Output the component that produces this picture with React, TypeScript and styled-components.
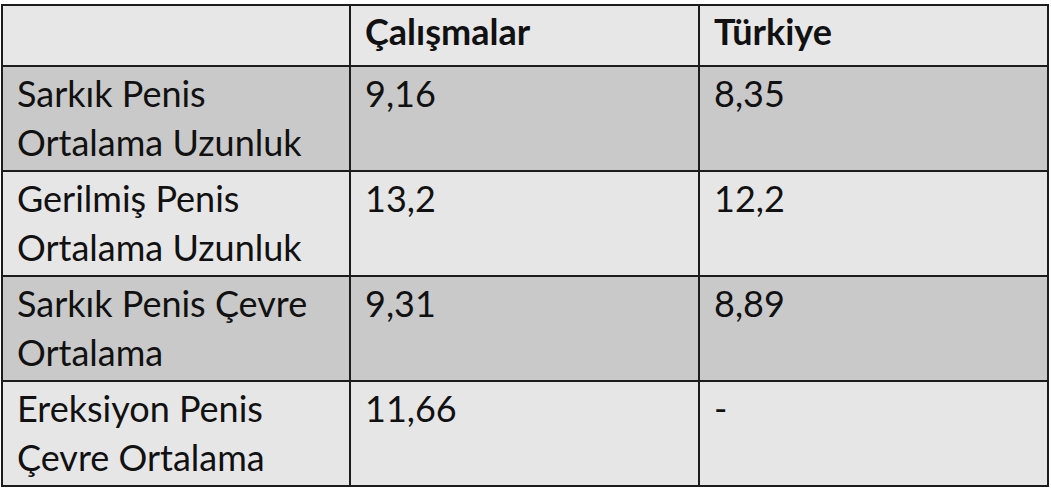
import React from 'react';
import styled, {createGlobalStyle} from 'styled-components';

const GlobalStyle = createGlobalStyle`
    html, body {
        margin: 0;
        padding: 0;
        background: #ffffff;
    }
`;

const rows = [
    {label: ['Sarkık Penis', 'Ortalama Uzunluk'], studies: '9,16', turkey: '8,35', dark: true},
    {label: ['Gerilmiş Penis', 'Ortalama Uzunluk'], studies: '13,2', turkey: '12,2', dark: false},
    {label: ['Sarkık Penis Çevre', 'Ortalama'], studies: '9,31', turkey: '8,89', dark: true},
    {label: ['Ereksiyon Penis', 'Çevre Ortalama'], studies: '11,66', turkey: '-', dark: false},
];

const App: React.FC = () => {
    return (
        <Page>
            <GlobalStyle/>
            <Table>
                <colgroup>
                    <col style={{width: 348}}/>
                    <col style={{width: 349}}/>
                    <col style={{width: 349}}/>
                </colgroup>
                <thead>
                    <HeadRow>
                        <HeadCell/>
                        <HeadCell>Çalışmalar</HeadCell>
                        <HeadCell>Türkiye</HeadCell>
                    </HeadRow>
                </thead>
                <tbody>
                    {rows.map((row, index) => (
                        <BodyRow key={index} $dark={row.dark}>
                            <Cell>
                                {row.label[0]}
                                <br/>
                                {row.label[1]}
                            </Cell>
                            <Cell>{row.studies}</Cell>
                            <Cell>{row.turkey}</Cell>
                        </BodyRow>
                    ))}
                </tbody>
            </Table>
        </Page>
    );
};

const Page = styled.div`
    width: 1051px;
    height: 502px;
    padding: 4px 0 0 1px;
    box-sizing: border-box;
    background: #ffffff;
`;

const Table = styled.table`
    width: 1048px;
    border-collapse: collapse;
    table-layout: fixed;
    font-family: Lato, "Open Sans", sans-serif;
    color: #111111;
`;

const HeadRow = styled.tr`
    height: 61px;
    background: #e7e7e7;
`;

const HeadCell = styled.th`
    border: 2px solid #1c1c1c;
    padding: 1px 14px 0;
    text-align: left;
    vertical-align: top;
    font-size: 36px;
    font-weight: 700;
    line-height: 49px;
`;

const BodyRow = styled.tr<{ $dark: boolean }>`
    height: 105px;
    background: ${(props) => (props.$dark ? '#c9c9c9' : '#e6e6e6')};
`;

const Cell = styled.td`
    border: 2px solid #1c1c1c;
    padding: 2px 14px 0;
    vertical-align: top;
    font-size: 36px;
    line-height: 49px;
    white-space: nowrap;
`;

export default App;
